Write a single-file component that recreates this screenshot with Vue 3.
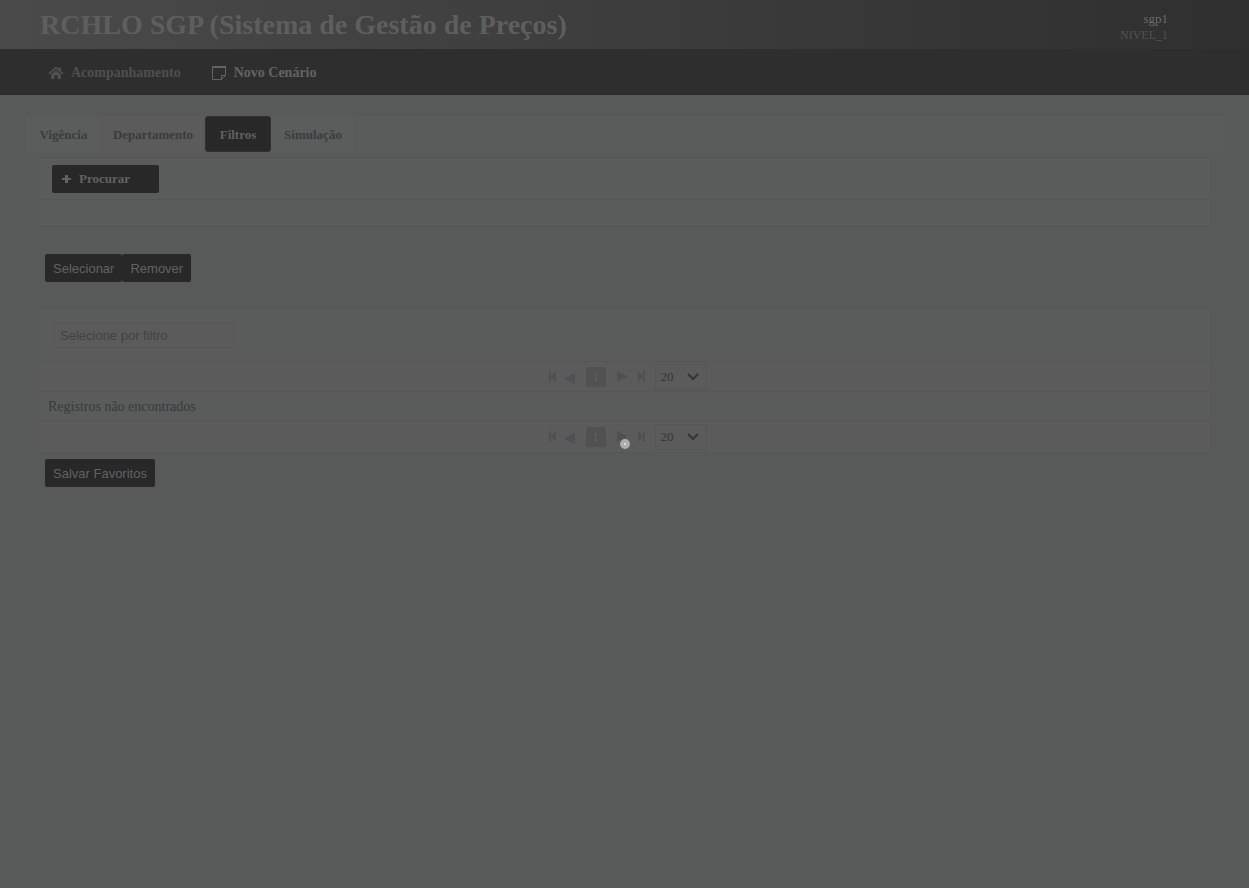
<script setup>
import { ref } from 'vue'

const tabs = [
  { label: 'Vigência', tone: 'plain' },
  { label: 'Departamento', tone: 'warm' },
  { label: 'Filtros', tone: 'active' },
  { label: 'Simulação', tone: 'plain' },
]
const active = ref('Filtros')
const pageSize = ref('20')
const filter = ref('')
</script>

<template>
  <div class="page">
    <header class="top">
      <h1>RCHLO SGP (Sistema de Gestão de Preços)</h1>
      <div class="user">
        <span class="name">sgp1</span>
        <span class="level">NIVEL_1</span>
      </div>
    </header>

    <nav class="menu">
      <a href="#" class="muted">
        <svg width="16" height="14" viewBox="0 0 16 14" aria-hidden="true">
          <path d="M8 .5 10.800 3V1.500h2.200v3.500L15.700 7.300l-1 1.200L8 2.800 1.300 8.500l-1-1.200zM8 4l5 4.300V13H9.500V9.500H6.500V13H3V8.300z" fill="currentColor" />
        </svg>
        Acompanhamento
      </a>
      <a href="#">
        <svg width="16" height="16" viewBox="0 0 16 16" aria-hidden="true">
          <path d="M1.500 1.500h13v9l-4 4h-9zM10.500 14V10.500H14" fill="none" stroke="currentColor" />
          <path d="M1 2H15" stroke="currentColor" stroke-width="2" />
        </svg>
        Novo Cenário
      </a>
    </nav>

    <main>
      <div class="tabs" role="tablist">
        <button
          v-for="t in tabs"
          :key="t.label"
          type="button"
          role="tab"
          :class="t.tone"
          :aria-selected="active === t.label"
          @click="active = t.label"
        >{{ t.label }}</button>
      </div>

      <div class="content">
        <section class="panel upload">
          <div class="bar">
            <button type="button" class="dark search">
              <svg width="9" height="9" viewBox="0 0 9 9" aria-hidden="true">
                <path d="M3 0h3v3h3v2H6v3H3V5H0V3h3z" fill="currentColor" />
              </svg>
              Procurar
            </button>
          </div>
          <div class="files"></div>
        </section>

        <div class="actions">
          <button type="button" class="dark">Selecionar</button>
          <button type="button" class="dark">Remover</button>
        </div>

        <section class="panel">
          <div class="filter">
            <input v-model="filter" type="text" placeholder="Selecione por filtro" aria-label="Selecione por filtro" />
          </div>
          <template v-for="n in 2" :key="n">
            <div class="pager">
              <button type="button" class="nav" aria-label="Primeira página">
                <svg width="10" height="12" viewBox="0 0 10 12" aria-hidden="true">
                  <path d="M3 0h2v5l5-5v11L5 6v5H3z" fill="currentColor" />
                </svg>
              </button>
              <button type="button" class="nav low" aria-label="Página anterior">
                <svg width="10" height="12" viewBox="0 0 10 12" aria-hidden="true">
                  <path d="M10 0v11L0 6V5z" fill="currentColor" />
                </svg>
              </button>
              <button type="button" class="current">1</button>
              <button type="button" class="nav" aria-label="Próxima página">
                <svg width="10" height="12" viewBox="0 0 10 12" aria-hidden="true">
                  <path d="M0 0v11L10 6V5z" fill="currentColor" />
                </svg>
              </button>
              <button type="button" class="nav" aria-label="Última página">
                <svg width="10" height="12" viewBox="0 0 10 12" aria-hidden="true">
                  <path d="M2 0l5 5V0h2v11H7V6l-5 5z" fill="currentColor" />
                </svg>
              </button>
              <span class="size">
                <select v-model="pageSize" aria-label="Linhas por página">
                  <option>20</option>
                </select>
                <svg width="12" height="8" viewBox="0 0 12 8" aria-hidden="true">
                  <path d="M1 1l5 5 5-5" fill="none" stroke="currentColor" stroke-width="2" />
                </svg>
              </span>
            </div>
            <div v-if="n === 1" class="empty">Registros não encontrados</div>
          </template>
        </section>

        <div class="save">
          <button type="button" class="dark">Salvar Favoritos</button>
        </div>
      </div>
    </main>

    <div class="loader" role="status" aria-label="Carregando"></div>
  </div>
</template>

<style>
html,
body {
  background: #585a59;
}
</style>

<style scoped>
.page {
  min-height: 100vh;
  font-family: "Liberation Serif", "Times New Roman", serif;
  font-size: 13px;
  line-height: 16px;
  color: #383a3a;
}
button,
input,
select {
  box-sizing: border-box;
  margin: 0;
  border: 0;
  font: inherit;
}
.top {
  display: flex;
  justify-content: space-between;
  align-items: center;
  box-sizing: border-box;
  height: 49px;
  padding: 0 81px 0 40px;
  background: linear-gradient(to right, #4a4a4a, #2f2f2f);
}
h1 {
  margin: 0;
  font-size: 28px;
  line-height: 32px;
  font-weight: bold;
  color: #5e5e5e;
}
.user {
  display: flex;
  flex-direction: column;
  align-items: flex-end;
  padding-top: 4px;
}
.name {
  color: #6c6c6c;
}
.level {
  font-size: 12px;
  color: #515353;
}
.menu {
  display: flex;
  align-items: center;
  gap: 30px;
  box-sizing: border-box;
  height: 46px;
  padding: 1px 48px 0;
  background: #2e2e2e;
}
.menu a {
  display: flex;
  align-items: center;
  gap: 7px;
  font-size: 14px;
  font-weight: bold;
  color: #636363;
  text-decoration: none;
}
.menu .muted {
  color: #4f4f4f;
}
main {
  padding: 21px 26px;
}
.tabs {
  display: grid;
  grid-template-columns: 76px 103px 66px 85px;
  height: 36px;
  background: #5a5c5b;
}
.tabs button {
  padding: 2px 0 0;
  border-right: 1px solid #575958;
  background: #5b5d5c;
  color: #3a3c3c;
  font-weight: bold;
  white-space: nowrap;
}
.tabs .warm {
  background: #5c5b5b;
}
.tabs .active {
  border: 1px solid #303030;
  border-radius: 3px;
  background: #282828;
  color: #606060;
}
.content {
  padding: 5px 12px 0;
}
.panel {
  border: 1px solid #555756;
  border-radius: 2px;
  background: #5a5c5b;
}
.bar {
  padding: 7px 13px 6px;
  border-bottom: 1px solid #555756;
}
.files {
  height: 26px;
}
.dark {
  height: 28px;
  padding: 2px 8px 0;
  border-radius: 2px;
  background: #282828;
  color: #626262;
  font-family: "Liberation Sans", Arial, sans-serif;
  font-size: 13px;
}
.search {
  display: flex;
  align-items: center;
  gap: 8px;
  width: 107px;
  padding: 0 10px;
  font-family: inherit;
  font-weight: bold;
}
.actions {
  display: flex;
  padding: 27px 7px 26px;
}
.filter {
  padding: 13px 15px;
}
.filter input {
  display: block;
  width: 180px;
  height: 26px;
  padding: 0 5px;
  border: 1px solid #555757;
  border-radius: 2px;
  background: #5c5b5b;
  color: #404248;
  font-family: "Liberation Sans", Arial, sans-serif;
}
.filter input::placeholder {
  color: #404248;
  opacity: 1;
}
.pager {
  display: flex;
  align-items: center;
  justify-content: center;
  gap: 9px;
  height: 29px;
  padding-left: 3px;
  border-top: 1px solid #555757;
  background: #5c5b5b;
}
.pager:last-child {
  height: 30px;
}
.nav {
  display: flex;
  width: 10px;
  height: 12px;
  padding: 0;
  background: none;
  color: #4e5052;
}
.low {
  margin-top: 4px;
}
.current {
  width: 20px;
  height: 20px;
  margin: 0 2px;
  padding: 0;
  border-radius: 2px;
  background: #515151;
  color: #626262;
}
.size {
  position: relative;
  display: flex;
  color: #343434;
}
.size select {
  appearance: none;
  width: 52px;
  height: 26px;
  padding: 0 5px;
  border: 1px solid #555757;
  border-radius: 2px;
  background: #5c5b5b;
  color: #343636;
}
.size svg {
  position: absolute;
  right: 8px;
  top: 9px;
  pointer-events: none;
}
.empty {
  padding: 7px 9px 6px;
  border-top: 1px solid #555757;
  font-size: 14px;
}
.save {
  padding: 6px 7px;
}
.loader {
  position: fixed;
  left: 50%;
  top: 50%;
  box-sizing: border-box;
  width: 10px;
  height: 10px;
  margin: -5px;
  border: 4px solid #adadad;
  border-radius: 50%;
  background: #ececec;
}
</style>
